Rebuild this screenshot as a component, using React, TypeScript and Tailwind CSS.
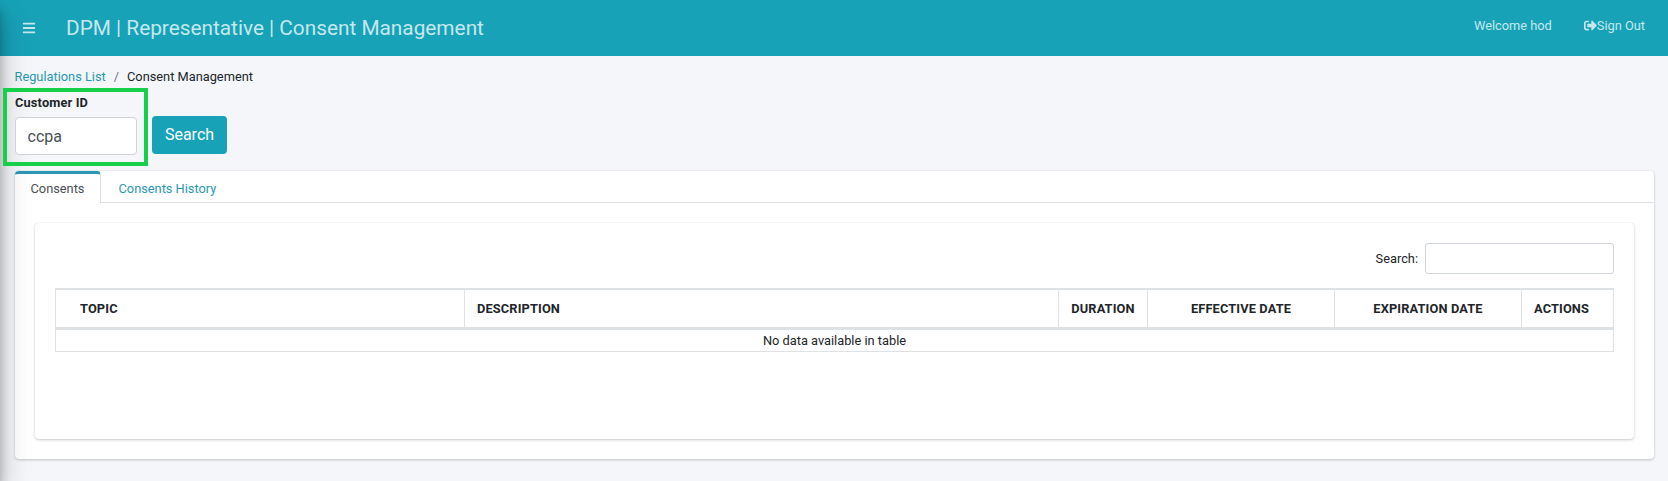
import { FaBars, FaSignOutAlt } from "react-icons/fa";

const columns = [
  { label: "TOPIC", cell: "w-[409px] border-r pl-[24px] text-left" },
  { label: "DESCRIPTION", cell: "w-[594px] border-r pl-[12px] text-left" },
  { label: "DURATION", cell: "w-[89px] border-r text-center" },
  { label: "EFFECTIVE DATE", cell: "w-[187px] border-r text-center" },
  { label: "EXPIRATION DATE", cell: "w-[187px] border-r text-center" },
  { label: "ACTIONS", cell: "w-[91px] pl-[12px] text-left" },
];

const cardShadow = "shadow-[0_0_1px_rgba(0,0,0,0.125),0_1px_3px_rgba(0,0,0,0.2)]";

function Header() {
  return (
    <header className="flex h-[56px] items-center bg-[#17a2b8] text-[#c5e8ed]">
      <FaBars className="ml-[22px] size-[14px]" />
      <h1 className="mt-[1px] ml-[30px] text-[20.8px] leading-[31px]">DPM | Representative | Consent Management</h1>
      <nav className="mr-[23px] mb-[5px] ml-auto flex items-center gap-[32px]">
        <span>Welcome hod</span>
        <a className="flex items-center">
          <FaSignOutAlt className="size-[13px]" />
          Sign Out
        </a>
      </nav>
    </header>
  );
}

function CustomerSearch() {
  return (
    <div className="flex items-start">
      <div className="relative z-10 ml-[3px] h-[78px] w-[145px] border-4 border-[#16d04b] pt-[3px] pl-[8px]">
        <label className="block h-[22px] font-bold leading-[16px] tracking-[0.15px]">Customer ID</label>
        <input
          defaultValue="ccpa"
          className="block h-[38px] w-[122px] rounded-[4px] border border-[#ced4da] bg-white px-[11.5px] text-[16px] text-[#495057] outline-none"
        />
      </div>
      <button className="mt-[28px] ml-[4px] h-[38px] w-[75px] rounded-[4px] bg-[#17a2b8] text-[16px] text-white">
        Search
      </button>
    </div>
  );
}

function ConsentTable() {
  return (
    <div className="w-[1559px] border-x border-b border-[#dee2e4]">
      <div className="flex h-[42px] border-t-2 border-b-[3px] border-[#dee2e4]">
        {columns.map((c) => (
          <div key={c.label} className={`shrink-0 border-[#dee2e4] font-bold leading-[37px] tracking-[0.14px] ${c.cell}`}>
            {c.label}
          </div>
        ))}
      </div>
      <div className="h-[21px] text-center leading-[21px]">No data available in table</div>
    </div>
  );
}

export default function App() {
  return (
    <div className="relative h-[481px] w-full overflow-hidden bg-[#f4f6f9] font-[Roboto,sans-serif] text-[12.8px] leading-[20px] text-[#212529]">
      <Header />
      <div className="ml-[14.5px] flex h-[32px] items-center gap-[8px] pt-[11px] pb-[1px]">
        <a className="text-[#2a98b0]">Regulations List</a>
        <span className="text-[#6c757d]">/</span>
        <span>Consent Management</span>
      </div>
      <CustomerSearch />
      <section className={`mt-[5px] ml-[15px] h-[288px] w-[1639px] rounded-[4px] bg-white ${cardShadow}`}>
        <div className="flex h-[32px]">
          <div className="w-[86px] rounded-t-[4px] border-t-[3px] border-r border-t-[#2a98b5] border-r-[#dee2e6] pt-[5px] text-center text-[#495057]">
            Consents
          </div>
          <div className="flex-1 border-b border-[#dee2e6] pt-[8px] pl-[17.5px] text-[#2a98b0]">Consents History</div>
        </div>
        <div className={`mt-[20px] ml-[20px] h-[216px] w-[1599px] rounded-[4px] bg-white pl-[20px] pt-[20px] ${cardShadow}`}>
          <label className="mb-[14px] flex w-[1559px] items-center justify-end gap-[7px]">
            Search:
            <input className="h-[31px] w-[189px] rounded-[3px] border border-[#ced4da] bg-white outline-none" />
          </label>
          <ConsentTable />
        </div>
      </section>
      <div className="pointer-events-none absolute top-0 -left-[250px] h-[481px] w-[250px] shadow-[0_14px_28px_rgba(0,0,0,0.25),0_10px_10px_rgba(0,0,0,0.22)]" />
    </div>
  );
}
